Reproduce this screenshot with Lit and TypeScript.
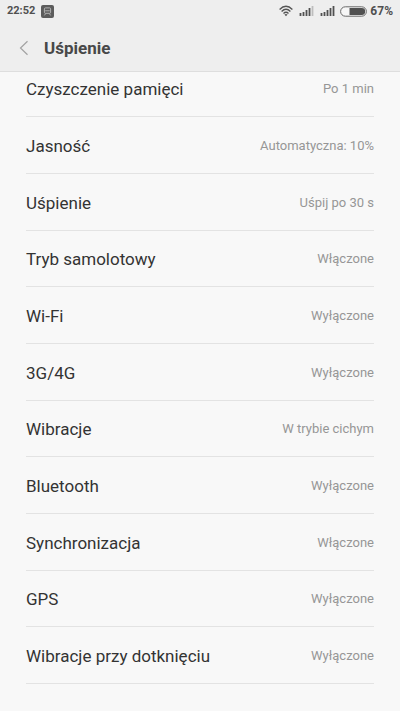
import { LitElement, html, svg, css } from "lit";
import { customElement, property } from "lit/decorators.js";

interface Setting {
  label: string;
  value: string;
}

const SETTINGS: Setting[] = [
  { label: "Czyszczenie pamięci", value: "Po 1 min" },
  { label: "Jasność", value: "Automatyczna: 10%" },
  { label: "Uśpienie", value: "Uśpij po 30 s" },
  { label: "Tryb samolotowy", value: "Włączone" },
  { label: "Wi-Fi", value: "Wyłączone" },
  { label: "3G/4G", value: "Wyłączone" },
  { label: "Wibracje", value: "W trybie cichym" },
  { label: "Bluetooth", value: "Wyłączone" },
  { label: "Synchronizacja", value: "Włączone" },
  { label: "GPS", value: "Wyłączone" },
  { label: "Wibracje przy dotknięciu", value: "Wyłączone" },
];

const BARS = [
  { x: 0, h: 3 },
  { x: 3, h: 4 },
  { x: 6, h: 6 },
  { x: 9, h: 8 },
  { x: 12, h: 10 },
];

@customElement("status-bar")
export class StatusBar extends LitElement {
  static styles = css`
    :host {
      display: flex;
      align-items: center;
      height: 22px;
      padding: 0 7px;
      color: #505050;
      font-size: 12px;
      font-weight: 700;
      line-height: 22px;
    }
    svg {
      display: block;
      flex: none;
    }
    .clock {
      font-size: 11px;
    }
    .app {
      margin-left: 6px;
    }
    .right {
      display: flex;
      align-items: center;
      margin-left: auto;
    }
    .signal {
      margin-left: 6px;
    }
    .battery {
      margin: 0 3px 0 5px;
    }
  `;

  // Signal meter with the given number of lit bars
  private signal(level: number) {
    return html`<svg class="signal" width="15" height="12" viewBox="0 0 15 12" aria-hidden="true">
      ${BARS.map(
        (b, i) => svg`<rect x=${b.x + 0.6} y=${11 - b.h} width="1.8" height=${b.h}
          fill=${i < level ? "#505050" : "#bdbdbd"}></rect>`
      )}
    </svg>`;
  }

  render() {
    return html`
      <span class="clock">22:52</span>
      <svg class="app" width="13" height="13" viewBox="0 0 13 13" aria-hidden="true">
        <rect width="13" height="13" rx="2" fill="#5c5c5c"></rect>
        <rect x="3.4" y="2.9" width="6.2" height="5.4" rx="1" fill="none" stroke="#bbb" stroke-width=".9"></rect>
        <path d="M4.2 5.8h4.6M4.6 8.6L3.4 10.4M8.4 8.6L9.6 10.4" fill="none" stroke="#bbb" stroke-width=".9"></path>
      </svg>
      <div class="right">
        <svg width="14" height="12" viewBox="0 0 14 12" aria-hidden="true">
          <g fill="none" stroke="#555" stroke-width="1.4">
            <path d="M.6 4.4Q7-1.8 13.4 4.4"></path>
            <path d="M2.6 6.5Q7 2.2 11.4 6.5"></path>
            <path d="M4.5 8.5Q7 6.1 9.5 8.5"></path>
          </g>
          <path d="M5.4 9.5Q7 8.3 8.6 9.5L7 11.2z" fill="#555"></path>
        </svg>
        ${this.signal(4)} ${this.signal(5)}
        <svg class="battery" width="27" height="11" viewBox="0 0 27 11" aria-hidden="true">
          <rect x=".6" y=".8" width="25.8" height="9.4" rx="4.7" fill="#f6f6f6" stroke="#686868" stroke-width="1"></rect>
          <path d="M9.5 2.1H21.8a3.4 3.4 0 0 1 0 6.8H9.5z" fill="#505050"></path>
        </svg>
        <span>67%</span>
      </div>
    `;
  }
}

@customElement("setting-row")
export class SettingRow extends LitElement {
  @property() label = "";
  @property() value = "";

  static styles = css`
    :host {
      display: flex;
    }
    .row {
      flex: 1;
      display: flex;
      align-items: center;
      justify-content: space-between;
      gap: 12px;
      padding: 1px 0 0;
      border: 0;
      border-bottom: 1px solid #e3e3e3;
      background: none;
      font-family: inherit;
      text-align: left;
      cursor: pointer;
    }
    .label {
      color: #333;
      font-size: 17px;
      line-height: 24px;
    }
    .value {
      color: #969696;
      font-size: 13px;
      line-height: 20px;
    }
  `;

  render() {
    return html`<button class="row" type="button">
      <span class="label">${this.label}</span>
      <span class="value">${this.value}</span>
    </button>`;
  }
}

@customElement("app-root")
export class AppRoot extends LitElement {
  static styles = css`
    :host {
      display: block;
      min-height: 100vh;
      background: #f8f8f8;
      font-family: Roboto, "Noto Sans", sans-serif;
    }
    .top {
      position: sticky;
      top: 0;
      z-index: 1;
      background: #eee;
      border-bottom: 1px solid #dedede;
    }
    .bar {
      display: flex;
      align-items: center;
      box-sizing: border-box;
      height: 49px;
      padding: 2px 18px 0;
      gap: 14px;
    }
    .back {
      display: flex;
      padding: 0;
      border: 0;
      background: none;
      cursor: pointer;
    }
    h1 {
      margin: 0;
      color: #484848;
      font-size: 17px;
      font-weight: 700;
      line-height: 24px;
    }
    /* The list rests slightly scrolled beneath the header */
    .list {
      margin: -11px 26px 0;
      padding: 0 0 24px;
      list-style: none;
    }
    .item {
      display: grid;
      min-height: 57px;
    }
    .item:nth-child(3n + 1) {
      min-height: 56px;
    }
  `;

  render() {
    return html`
      <header class="top">
        <status-bar></status-bar>
        <div class="bar">
          <button class="back" type="button" aria-label="Wstecz">
            <svg width="12" height="16" viewBox="0 0 12 16" aria-hidden="true">
              <path d="M9.5 1.2L2.5 8l7 6.8" fill="none" stroke="#a2a2a2" stroke-width="1.2"></path>
            </svg>
          </button>
          <h1>Uśpienie</h1>
        </div>
      </header>
      <main>
        <ul class="list">
          ${SETTINGS.map(
            (s) => html`<li class="item">
              <setting-row .label=${s.label} .value=${s.value}></setting-row>
            </li>`
          )}
        </ul>
      </main>
    `;
  }
}
